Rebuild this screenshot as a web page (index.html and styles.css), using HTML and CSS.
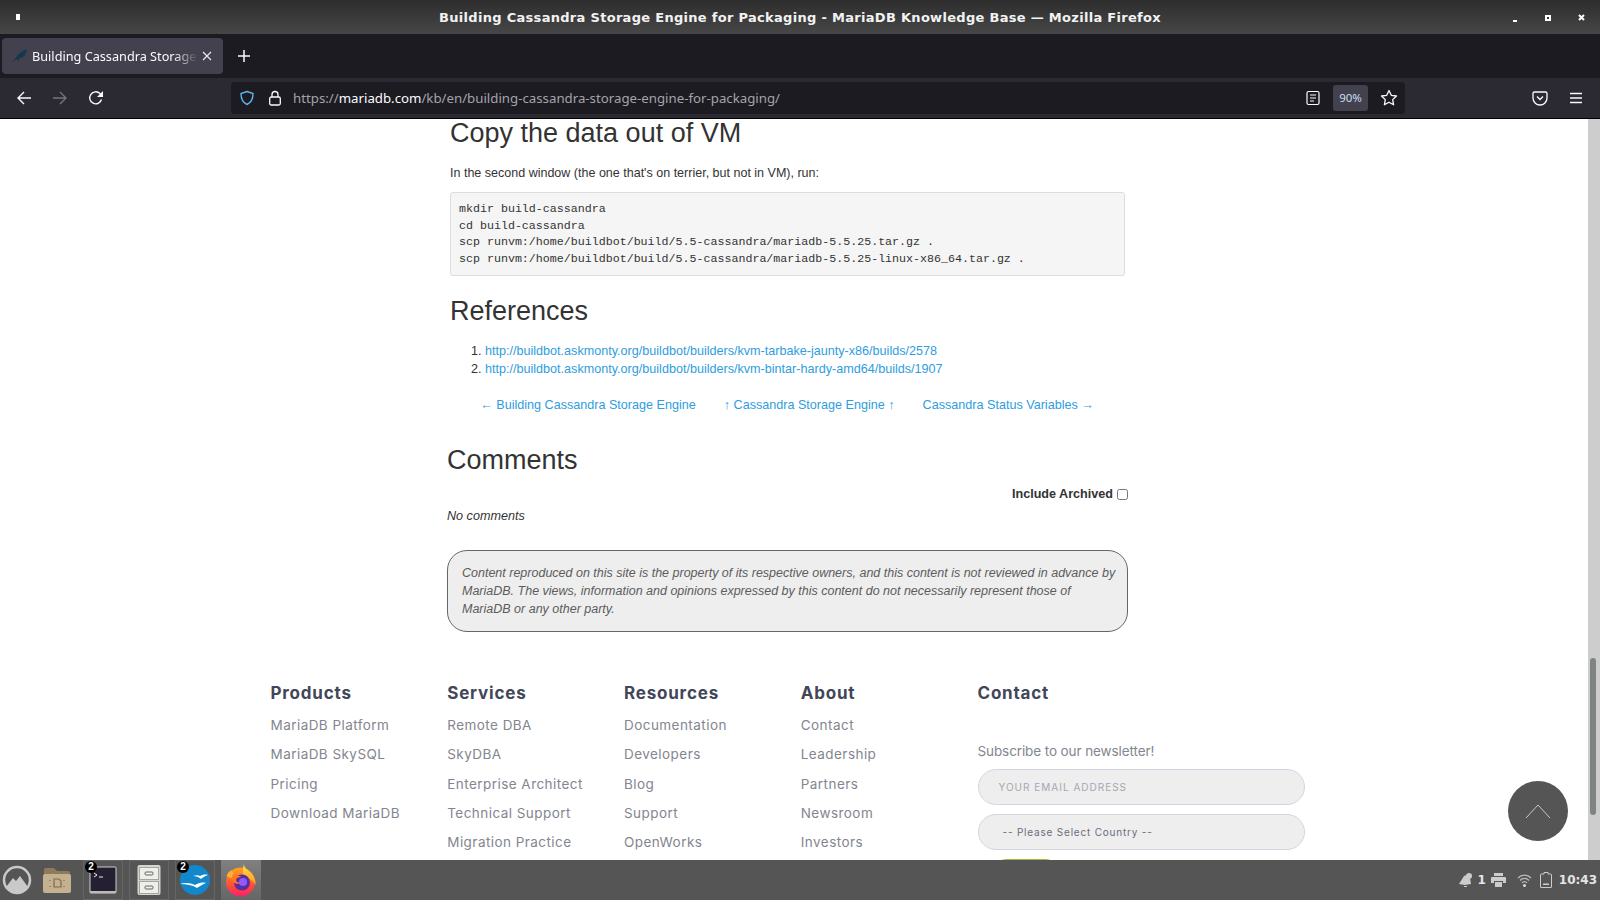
FILE: index.html
```html
<!DOCTYPE html>
<html lang="en">
<head>
    <meta charset="UTF-8">
    <title>Building Cassandra Storage Engine for Packaging - MariaDB Knowledge Base</title>
    <link rel="stylesheet" href="styles.css">
</head>
<body>
    <!-- Window title -->
    <div class="titlebar">
        <span class="win-menu"></span>
        <span class="win-title">Building Cassandra Storage Engine for Packaging - MariaDB Knowledge Base — Mozilla Firefox</span>
        <div class="win-buttons">
            <span class="win-min"></span>
            <span class="win-max"></span>
            <svg class="win-close" width="7" height="7" viewBox="0 0 7 7"><path d="M1 1l5 5M6 1L1 6" stroke="#fff" stroke-width="2"/></svg>
        </div>
    </div>

    <!-- Tabs -->
    <div class="tabbar">
        <div class="tab">
            <svg class="tab-icon" width="17" height="14" viewBox="0 0 17 14"><path d="M0 13C3 12 4 10 6 7 8 4 11 2 16 0c-1 2-1 4-2 6-1 2-3 3-5 3-1 1-1 2-1 4-1-2-1-3-1-3-2 1-4 2-7 3z" fill="#13394f"/></svg>
            <span class="tab-title">Building Cassandra Storage</span>
            <svg class="tab-close" width="10" height="10" viewBox="0 0 10 10"><path d="M1 1l8 8M9 1l-8 8" stroke="#e8e8ea" stroke-width="1.2"/></svg>
        </div>
        <svg class="new-tab" width="14" height="14" viewBox="0 0 14 14"><path d="M7 1v12M1 7h12" stroke="#fbfbfe" stroke-width="1.5"/></svg>
    </div>

    <!-- Navigation -->
    <div class="navbar">
        <svg class="nav-btn" width="16" height="16" viewBox="0 0 16 16"><path d="M15 8H2M8 2L2 8l6 6" fill="none" stroke="#fbfbfe" stroke-width="1.4"/></svg>
        <svg class="nav-btn" width="16" height="16" viewBox="0 0 16 16"><path d="M1 8h13M8 2l6 6-6 6" fill="none" stroke="#75747d" stroke-width="1.4"/></svg>
        <svg class="nav-btn" width="16" height="16" viewBox="0 0 16 16"><path d="M13.5 9.5A6 6 0 1 1 12 3.6L14 6" fill="none" stroke="#fbfbfe" stroke-width="1.4"/><path d="M15 1v6H9z" fill="#fbfbfe"/></svg>
        <div class="urlbar">
            <svg class="url-shield" width="16" height="16" viewBox="0 0 16 16"><path d="M8 1.5l6 2c0 5-1.500 9-6 11-4.500-2-6-6-6-11z" fill="none" stroke="#5cb4f0" stroke-width="1.400"/></svg>
            <svg class="url-lock" width="14" height="16" viewBox="0 0 14 16"><rect x="1.700" y="7" width="10.600" height="8" rx="1.500" fill="none" stroke="#fbfbfe" stroke-width="1.300"/><path d="M4 7V4.500a3 3 0 0 1 6 0V7" fill="none" stroke="#fbfbfe" stroke-width="1.300"/></svg>
            <span class="url-text">https://<b>mariadb.com</b>/kb/en/building-cassandra-storage-engine-for-packaging/</span>
            <svg class="url-reader" width="14" height="16" viewBox="0 0 14 16"><rect x="1" y="1.500" width="12" height="13" rx="1.500" fill="none" stroke="#fbfbfe" stroke-width="1.200"/><path d="M4 5h6M4 8h6M4 11h4" stroke="#fbfbfe" stroke-width="1.200"/></svg>
            <span class="url-zoom">90%</span>
            <svg class="url-star" width="18" height="18" viewBox="0 0 18 18"><path d="M9 1.500l2.300 4.800 5.200.7-3.800 3.600.9 5.200L9 13.300l-4.600 2.500.9-5.200L1.500 7l5.200-.7z" fill="none" stroke="#fbfbfe" stroke-width="1.300" stroke-linejoin="round"/></svg>
        </div>
        <svg class="nav-pocket" width="16" height="16" viewBox="0 0 16 16"><path d="M2.500 2h11A1.500 1.500 0 0 1 15 3.500V8a7 7 0 0 1-14 0V3.500A1.500 1.500 0 0 1 2.500 2z" fill="none" stroke="#fbfbfe" stroke-width="1.300"/><path d="M5 6.500l3 3 3-3" fill="none" stroke="#fbfbfe" stroke-width="1.300"/></svg>
        <svg class="nav-menu" width="14" height="12" viewBox="0 0 14 12"><path d="M1 1.500h12M1 6h12M1 10.500h12" stroke="#fbfbfe" stroke-width="1.300"/></svg>
    </div>

    <!-- Page -->
    <div class="viewport">
        <div class="page">
            <div class="article">
                <div class="kb-body">
                    <h2 class="kb-heading">Copy the data out of VM</h2>
                    <p class="kb-text">In the second window (the one that's on terrier, but not in VM), run:</p>
                    <pre class="kb-code">mkdir build-cassandra
cd build-cassandra
scp runvm:/home/buildbot/build/5.5-cassandra/mariadb-5.5.25.tar.gz .
scp runvm:/home/buildbot/build/5.5-cassandra/mariadb-5.5.25-linux-x86_64.tar.gz .</pre>
                    <h2 class="kb-heading kb-refs">References</h2>
                    <ol class="kb-list">
                        <li><a href="#">http://buildbot.askmonty.org/buildbot/builders/kvm-tarbake-jaunty-x86/builds/2578</a></li>
                        <li><a href="#">http://buildbot.askmonty.org/buildbot/builders/kvm-bintar-hardy-amd64/builds/1907</a></li>
                    </ol>
                    <div class="kb-nav">
                        <a href="#">← Building Cassandra Storage Engine</a>
                        <a href="#">↑ Cassandra Storage Engine ↑</a>
                        <a href="#">Cassandra Status Variables →</a>
                    </div>
                </div>
                <h2 class="comments-title">Comments</h2>
                <div class="archived">
                    <label for="archived">Include Archived</label>
                    <input type="checkbox" id="archived">
                </div>
                <p class="no-comments">No comments</p>
                <div class="disclaimer">Content reproduced on this site is the property of its respective owners, and this content is not reviewed in advance by MariaDB. The views, information and opinions expressed by this content do not necessarily represent those of MariaDB or any other party.</div>
            </div>

            <div class="footer">
                <div class="foot-col">
                    <h4>Products</h4>
                    <a href="#">MariaDB Platform</a>
                    <a href="#">MariaDB SkySQL</a>
                    <a href="#">Pricing</a>
                    <a href="#">Download MariaDB</a>
                </div>
                <div class="foot-col">
                    <h4>Services</h4>
                    <a href="#">Remote DBA</a>
                    <a href="#">SkyDBA</a>
                    <a href="#">Enterprise Architect</a>
                    <a href="#">Technical Support</a>
                    <a href="#">Migration Practice</a>
                </div>
                <div class="foot-col">
                    <h4>Resources</h4>
                    <a href="#">Documentation</a>
                    <a href="#">Developers</a>
                    <a href="#">Blog</a>
                    <a href="#">Support</a>
                    <a href="#">OpenWorks</a>
                </div>
                <div class="foot-col">
                    <h4>About</h4>
                    <a href="#">Contact</a>
                    <a href="#">Leadership</a>
                    <a href="#">Partners</a>
                    <a href="#">Newsroom</a>
                    <a href="#">Investors</a>
                </div>
                <div class="foot-contact">
                    <h4>Contact</h4>
                    <p class="subscribe">Subscribe to our newsletter!</p>
                    <div class="foot-field foot-email">YOUR EMAIL ADDRESS</div>
                    <div class="foot-field foot-country">-- Please Select Country --</div>
                    <div class="foot-submit"></div>
                </div>
            </div>
        </div>
        <div class="scrollbar"><div class="scroll-thumb"></div></div>
        <div class="to-top">
            <svg width="26" height="14" viewBox="0 0 26 14"><path d="M1 14L13 1l12 13" fill="none" stroke="#c8c8c8" stroke-width="1"/></svg>
        </div>
    </div>

    <!-- Desktop panel -->
    <div class="taskbar">
        <svg class="start" width="32" height="32" viewBox="0 0 32 32"><circle cx="16" cy="16" r="13" fill="none" stroke="#c9c9c9" stroke-width="2.500"/><path d="M5 23l7-9 3 3 4-5 8 11a13 13 0 0 1-22 0z" fill="#c9c9c9"/></svg>
        <div class="task-item">
            <svg width="32" height="30" viewBox="0 0 32 30"><path d="M3 5a2 2 0 0 1 2-2h8l3 3h11a2 2 0 0 1 2 2v18a2 2 0 0 1-2 2H5a2 2 0 0 1-2-2z" fill="#8f7b59"/><rect x="2" y="9" width="28" height="19" rx="2" fill="#c4b18f"/><path d="M13 14h5l2 2v6h-7zM9 15v1M9 21v1M23 15v1M23 21v1" fill="none" stroke="#7d6c4e" stroke-width="1.200"/></svg>
        </div>
        <div class="task-item task-open">
            <span class="task-badge">2</span>
            <svg width="28" height="28" viewBox="0 0 28 28"><rect x="1" y="1" width="26" height="26" rx="1" fill="#241f31" stroke="#cfcfcf"/><rect x="1" y="25" width="26" height="2" fill="#bbb"/><path d="M5 7l3 2-3 2" fill="none" stroke="#eee"/><path d="M10 11h4" stroke="#eee"/></svg>
        </div>
        <div class="task-item task-open">
            <svg width="24" height="32" viewBox="0 0 24 32"><rect x="0.500" y="1" width="23" height="30" rx="2" fill="#d6d6d0"/><rect x="2.500" y="3.500" width="19" height="12" fill="#eeeeea" stroke="#a5a5a0"/><rect x="2.500" y="17.500" width="19" height="12" fill="#eeeeea" stroke="#a5a5a0"/><rect x="8" y="8" width="8" height="3" rx="1" fill="none" stroke="#666"/><rect x="8" y="22" width="8" height="3" rx="1" fill="none" stroke="#666"/></svg>
        </div>
        <div class="task-item task-open">
            <span class="task-badge">2</span>
            <svg width="32" height="32" viewBox="0 0 32 32"><circle cx="16" cy="16" r="15" fill="#1387cb"/><path d="M1 20c5-2 11-1 15 1 4-2 6-3 11-2-3 1-6 3-9 5-5-3-10-4-17-4zM14 12c3-1 5-1 7 0 2-1 5-2 8-1-3 1-5 2-7 4-2-2-5-3-8-3z" fill="#fff"/></svg>
        </div>
        <div class="task-item task-active">
            <svg width="32" height="34" viewBox="0 0 32 34">
                <defs>
                    <linearGradient id="fx-body" x1="0.500" y1="0.100" x2="0.500" y2="1"><stop offset="0" stop-color="#ff9a1f"/><stop offset="0.600" stop-color="#ff4a3a"/><stop offset="1" stop-color="#f5206e"/></linearGradient>
                    <linearGradient id="fx-top" x1="0.500" y1="0" x2="0.500" y2="1"><stop offset="0" stop-color="#ffe24a"/><stop offset="1" stop-color="#ff9a1f"/></linearGradient>
                </defs>
                <circle cx="15.500" cy="19" r="14.500" fill="url(#fx-body)"/>
                <path d="M19 1c0 4 3 5 6 8 4 4 6 8 5.500 13-2-4-6-7-11-8-2-3-2-8-.500-13z" fill="url(#fx-top)"/>
                <path d="M1.500 13c1-3 3-5 5-6 0 2 1 3 3 3-2 1-3 3-2 5-2 0-4-1-6-2z" fill="#ffb02e"/>
                <circle cx="17" cy="19.500" r="8" fill="#5c2d9e"/>
                <circle cx="18" cy="19" r="4" fill="#9059ff"/>
                <path d="M7 14c3-2 7-2 9 0-2 0-5 1-5 3s3 3 5 3c-4 2-10 0-9-6z" fill="#ff7a1f"/>
            </svg>
        </div>
        <div class="tray">
            <svg width="15" height="15" viewBox="0 0 15 15"><path d="M1 11l5-8c2-1 5 0 6 2l1 6-6 1z" fill="#ccc"/><circle cx="11" cy="3" r="3" fill="#ccc"/><path d="M6 13h3v1H6z" fill="#ccc"/></svg>
            <span class="tray-count">1</span>
            <svg class="tray-print" width="15" height="14" viewBox="0 0 15 14"><path d="M3 0h9v3H3zM1 4h13a1 1 0 0 1 1 1v5h-3V8H3v2H0V5a1 1 0 0 1 1-1zM4 9h7v5H4z" fill="#ccc"/></svg>
            <svg class="tray-wifi" width="15" height="14" viewBox="0 0 15 14"><path d="M1 5a9 9 0 0 1 13 0M3 7.500a6 6 0 0 1 9 0M5 10a3 3 0 0 1 5 0" fill="none" stroke="#bbb" stroke-width="1.200"/><circle cx="7.500" cy="12.500" r="1.500" fill="#ddd"/></svg>
            <svg class="tray-batt" width="12" height="16" viewBox="0 0 12 16"><path d="M4 .5h4v1.500h2.500a1 1 0 0 1 1 1V15a.5.500 0 0 1-.5.500H1a.5.500 0 0 1-.5-.500V3a1 1 0 0 1 1-1H4z" fill="none" stroke="#ccc"/><rect x="3" y="11.500" width="6" height="1.500" fill="#ccc"/></svg>
            <span class="tray-clock">10:43</span>
        </div>
    </div>
</body>
</html>
```

FILE: styles.css
```css
* {
    box-sizing: border-box;
}
html, body {
    height: 100%;
}
body {
    margin: 0;
    height: 900px;
    display: flex;
    flex-direction: column;
    overflow: hidden;
    background-color: #fff;
    font-family: 'Liberation Sans', Arial, sans-serif;
}
svg {
    display: block;
    flex: none;
}

/* window title */
.titlebar {
    height: 34px;
    flex: none;
    display: flex;
    align-items: center;
    justify-content: center;
    position: relative;
    background: linear-gradient(#2d2d2d, #474747);
}
.win-menu {
    position: absolute;
    left: 16px;
    top: 14px;
    width: 4px;
    height: 6px;
    background: #fff;
}
.win-title {
    color: #f2f2f2;
    font-family: 'DejaVu Sans', sans-serif;
    font-size: 13px;
    font-weight: bold;
    letter-spacing: 0.3px;
}
.win-buttons {
    position: absolute;
    right: 15px;
    top: 14px;
    width: 72px;
    height: 7px;
    display: flex;
    align-items: flex-end;
    justify-content: space-between;
}
.win-min {
    width: 4px;
    height: 2px;
    margin-bottom: -1px;
    background: #fff;
}
.win-max {
    width: 6px;
    height: 6px;
    border: 2px solid #fff;
}

/* tabs */
.tabbar {
    height: 44px;
    flex: none;
    display: flex;
    align-items: center;
    padding-left: 2px;
    background: #1c1b22;
}
.tab {
    width: 221px;
    height: 36px;
    display: flex;
    align-items: center;
    padding: 0 11px 0 9px;
    border-radius: 4px;
    background: #42414d;
}
.tab-icon {
    margin-right: 4px;
}
.tab-title {
    flex: 1;
    overflow: hidden;
    white-space: nowrap;
    color: #fbfbfe;
    font-family: 'Noto Sans', sans-serif;
    font-size: 12.7px;
    -webkit-mask-image: linear-gradient(to right, #000 85%, transparent 100%);
    mask-image: linear-gradient(to right, #000 85%, transparent 100%);
}
.tab-close {
    margin-left: 4px;
}
.new-tab {
    margin-left: 14px;
}

/* navigation */
.navbar {
    height: 41px;
    flex: none;
    display: flex;
    align-items: center;
    background: #2b2a33;
    border-bottom: 1px solid #000;
}
.nav-btn {
    margin-left: 16px;
    margin-right: 4px;
}
.urlbar {
    width: 1174px;
    height: 32px;
    margin-left: 123px;
    display: flex;
    align-items: center;
    border-radius: 4px;
    background: #1c1b22;
}
.url-shield {
    margin-left: 8px;
}
.url-lock {
    margin-left: 13px;
}
.url-text {
    flex: 1;
    margin-left: 11px;
    color: #a4a3aa;
    font-family: 'Noto Sans', sans-serif;
    font-size: 13.25px;
}
.url-text b {
    color: #fbfbfe;
    font-weight: normal;
}
.url-zoom {
    width: 35px;
    height: 26px;
    margin-left: 13px;
    line-height: 26px;
    text-align: center;
    border-radius: 3px;
    background: #42414d;
    color: #c9dcf2;
    font-family: 'Noto Sans', sans-serif;
    font-size: 11.5px;
}
.url-star {
    margin: 0 7px 0 12px;
}
.nav-pocket {
    margin-left: 127px;
    margin-right: 21px;
}

/* page */
.viewport {
    flex: 1;
    min-height: 0;
    display: flex;
    position: relative;
    overflow: hidden;
}
.page {
    flex: 1;
    min-width: 0;
    height: 741px;
    overflow: hidden;
    padding-right: 13px;
}
.article {
    width: 681px;
    margin: 0 auto;
    color: #333;
    font-size: 12.6px;
}
.kb-body {
    padding-left: 3px;
}
.kb-heading {
    margin: 0;
    height: 28px;
    line-height: 28px;
    font-size: 27px;
    font-weight: normal;
    color: #333;
}
.kb-text {
    margin: 17px 0 0;
    height: 18px;
    line-height: 18px;
    font-size: 12.53px;
}
.kb-code {
    width: 675px;
    height: 84px;
    margin: 10px 0 0;
    padding: 8px;
    border: 1px solid #ddd;
    border-radius: 3px;
    background: #f5f5f5;
    color: #333;
    font-family: 'Liberation Mono', monospace;
    font-size: 11.65px;
    line-height: 16.7px;
}
.kb-refs {
    margin-top: 21px;
}
.kb-list {
    margin: 17px 0 0;
    padding-left: 35px;
    line-height: 18px;
}
.kb-list a, .kb-nav a {
    color: #2f9de0;
    text-decoration: none;
}
.kb-nav {
    display: flex;
    justify-content: center;
    gap: 28px;
    margin-top: 18px;
    padding-right: 4px;
    line-height: 18px;
}
.comments-title {
    margin: 31px 0 0;
    height: 30px;
    line-height: 30px;
    font-size: 27px;
    font-weight: normal;
}
.archived {
    display: flex;
    justify-content: flex-end;
    align-items: center;
    gap: 4px;
    height: 18px;
    margin-top: 10px;
    font-weight: bold;
}
.archived input {
    width: 11px;
    height: 11px;
    margin: 0;
}
.no-comments {
    height: 18px;
    margin: 4px 0 0;
    line-height: 18px;
    font-style: italic;
}
.disclaimer {
    height: 82px;
    margin-top: 25px;
    padding: 13px 8px 0 14px;
    border: 1px solid #666;
    border-radius: 20px;
    background: #eee;
    color: #5c5c5c;
    font-size: 12.5px;
    font-style: italic;
    line-height: 18px;
}

/* footer */
.footer {
    width: 1034px;
    margin: 51px auto 0;
    display: flex;
    font-family: 'Inter', sans-serif;
    font-size: 13.5px;
    letter-spacing: 0.45px;
    color: #83868f;
}
.footer h4 {
    margin: 0 0 12px;
    height: 20px;
    line-height: 20px;
    font-size: 17px;
    font-weight: 700;
    letter-spacing: 0.8px;
    color: #424659;
}
.foot-col {
    width: 176.75px;
    display: flex;
    flex-direction: column;
}
.foot-col a {
    height: 29.3px;
    line-height: 20px;
    color: #83868f;
    text-decoration: none;
}
.foot-contact {
    flex: 1;
}
.subscribe {
    height: 20px;
    margin: 38px 0 8px;
    line-height: 20px;
    letter-spacing: -0.1px;
}
.foot-field {
    width: 327px;
    height: 36px;
    margin-bottom: 9px;
    line-height: 34px;
    border: 1px solid #d3d6e2;
    border-radius: 18px;
    background: #eee;
    font-size: 10px;
    letter-spacing: 1px;
}
.foot-email {
    padding-left: 20px;
    color: #a5a7b0;
}
.foot-country {
    padding-left: 24px;
    color: #696c7c;
    letter-spacing: 0.8px;
}
.foot-submit {
    width: 68px;
    height: 30px;
    margin-left: 14px;
    border-radius: 15px;
    background: #96c03d;
}

.scrollbar {
    width: 12px;
    flex: none;
    position: relative;
    background: #cdcdcd;
}
.scroll-thumb {
    position: absolute;
    left: 2px;
    top: 539px;
    width: 6px;
    height: 157px;
    border-radius: 3px;
    background: #7f8382;
}
.to-top {
    position: absolute;
    left: 1508px;
    top: 662px;
    width: 60px;
    height: 60px;
    display: flex;
    align-items: center;
    justify-content: center;
    border-radius: 50%;
    background: #555;
}

/* desktop panel */
.taskbar {
    height: 40px;
    flex: none;
    display: flex;
    align-items: center;
    background: #555;
}
.start {
    margin-left: 1px;
    margin-right: 4px;
}
.task-item {
    width: 40px;
    height: 40px;
    margin-right: 6px;
    display: flex;
    align-items: center;
    justify-content: center;
    position: relative;
}
.task-open {
    outline: 1px solid #666;
    outline-offset: -1px;
}
.task-active {
    background: linear-gradient(#808080, #666);
}
.task-badge {
    position: absolute;
    left: 2px;
    top: 1px;
    width: 12px;
    height: 12px;
    border-radius: 50%;
    background: #000;
    color: #fff;
    font-size: 10px;
    font-weight: bold;
    line-height: 12px;
    text-align: center;
}
.tray {
    margin-left: auto;
    display: flex;
    align-items: center;
    padding-right: 3px;
    color: #e6e6e6;
    font-family: 'DejaVu Sans', sans-serif;
    font-size: 12px;
    font-weight: bold;
}
.tray-count {
    margin-left: 4px;
}
.tray-print {
    margin-left: 5px;
}
.tray-wifi {
    margin-left: 11px;
}
.tray-batt {
    margin-left: 8px;
}
.tray-clock {
    margin-left: 7px;
}
```
